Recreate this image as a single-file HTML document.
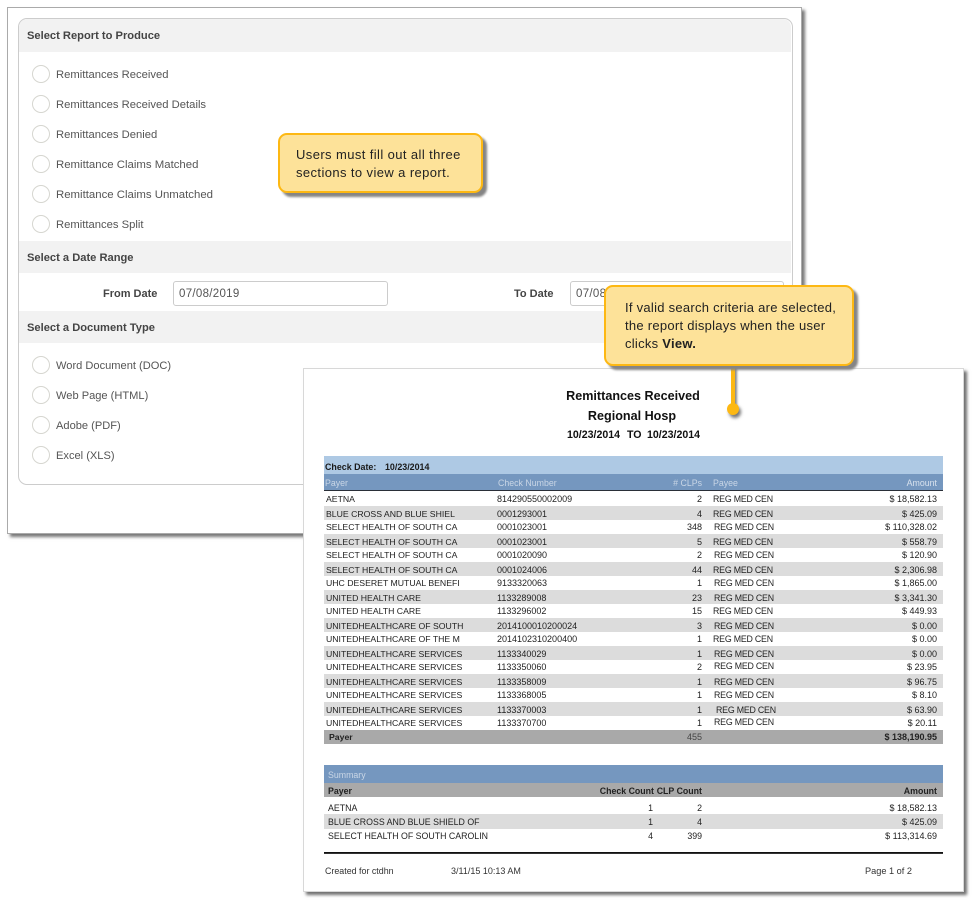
<!DOCTYPE html>
<html><head><meta charset="utf-8">
<style>
html,body{margin:0;padding:0;background:#fff}
body{width:972px;height:903px;position:relative;overflow:hidden;font-family:"Liberation Sans",sans-serif}
#w{position:absolute;left:0;top:0;width:972px;height:903px;filter:blur(.25px)}
.abs,.t,.rad,.hd,.lb{position:absolute}
.hd{left:19px;width:772px;background:#f2f2f2;}
.h{position:absolute;left:27px;font-size:11.15px;font-weight:bold;color:#444;line-height:14px;white-space:nowrap}
.lb{left:56px;font-size:11.25px;color:#555;line-height:14px;white-space:nowrap}
.rad{left:32px;width:16px;height:16px;border:1px solid #d6d6d0;border-radius:50%;background:#fff}
.t{font-size:8.8px;line-height:12px;color:#222;white-space:nowrap}
.row{position:absolute;left:324px;width:619px;height:14px}
.g{background:#dcdcdc}
.a,.b,.c,.d,.e{position:absolute;top:1px;line-height:12px;color:#222;white-space:nowrap}
.g span{top:2px}
.a{left:2px;font-size:8.7px}
.b{left:173px;font-size:9px}
.c{right:241px;font-size:9px}
.d{left:389px;font-size:8.8px;letter-spacing:-.2px}
.e{right:6px;font-size:9px}
.call{position:absolute;box-sizing:border-box;background:#fde299;border:2px solid #fdb813;border-radius:9px;box-shadow:4px 4px 2px #858585;font-size:13px;line-height:18px;color:#222;white-space:nowrap}
</style></head>
<body><div id="w">
<!-- back panel -->
<div class="abs" style="left:7px;top:7px;width:793px;height:525px;background:#fff;border:1px solid #aaa;box-shadow:3px 3px 3px #777"></div>
<div class="abs" style="left:18px;top:18px;width:773px;height:465px;background:#fff;border:1px solid #ccc;border-radius:9px"></div>
<div class="hd" style="top:19px;height:33px;border-radius:8px 8px 0 0"></div>
<div class="h" style="top:29px">Select Report to Produce</div>
<div class="rad" style="top:65px"></div><div class="lb" style="top:68px">Remittances Received</div>
<div class="rad" style="top:95px"></div><div class="lb" style="top:98px">Remittances Received Details</div>
<div class="rad" style="top:125px"></div><div class="lb" style="top:128px">Remittances Denied</div>
<div class="rad" style="top:155px"></div><div class="lb" style="top:158px;font-size:11.4px">Remittance Claims Matched</div>
<div class="rad" style="top:185px"></div><div class="lb" style="top:188px;font-size:11.4px">Remittance Claims Unmatched</div>
<div class="rad" style="top:215px"></div><div class="lb" style="top:218px">Remittances Split</div>
<div class="hd" style="top:241px;height:32px"></div>
<div class="h" style="top:251px">Select a Date Range</div>
<div class="h" style="left:103px;top:287px;font-size:11px">From Date</div>
<div class="abs" style="left:173px;top:281px;width:213px;height:23px;border:1px solid #ccc;border-radius:3px;background:#fff"></div>
<div class="lb" style="left:179px;top:287px;font-size:11.5px;letter-spacing:.3px">07/08/2019</div>
<div class="h" style="left:514px;top:287px;font-size:11px">To Date</div>
<div class="abs" style="left:570px;top:281px;width:212px;height:23px;border:1px solid #ccc;border-radius:3px;background:#fff"></div>
<div class="lb" style="left:576px;top:287px;font-size:11.5px;letter-spacing:.3px">07/08/2019</div>
<div class="hd" style="top:311px;height:32px"></div>
<div class="h" style="top:321px">Select a Document Type</div>
<div class="rad" style="top:356px"></div><div class="lb" style="top:359px;font-size:11.1px">Word Document (DOC)</div>
<div class="rad" style="top:386px"></div><div class="lb" style="top:389px;font-size:11.1px">Web Page (HTML)</div>
<div class="rad" style="top:416px"></div><div class="lb" style="top:419px;font-size:11.1px">Adobe (PDF)</div>
<div class="rad" style="top:446px"></div><div class="lb" style="top:449px;font-size:11.1px">Excel (XLS)</div>

<!-- callout 1 -->
<div class="call" style="left:278px;top:133px;width:205px;height:60px;padding:11px 0 0 16px;letter-spacing:.4px">Users must fill out all three<br>sections to view a report.</div>

<!-- report -->
<div class="abs" style="left:303px;top:368px;width:659px;height:522px;background:#fff;border:1px solid #d8d8d8;box-shadow:3px 3px 3px #6f6f6f"></div>
<div class="t" style="left:533px;width:200px;text-align:center;top:389px;font-size:12.6px;line-height:14px;font-weight:bold;color:#111">Remittances Received</div>
<div class="t" style="left:532px;width:200px;text-align:center;top:409px;font-size:12.6px;line-height:14px;font-weight:bold;color:#111">Regional Hosp</div>
<div class="t" style="left:567px;top:429px;font-size:10.6px;line-height:13px;font-weight:bold;color:#111">10/23/2014</div>
<div class="t" style="left:627px;top:429px;font-size:10.6px;line-height:13px;font-weight:bold;color:#111">TO</div>
<div class="t" style="left:647px;top:429px;font-size:10.6px;line-height:13px;font-weight:bold;color:#111">10/23/2014</div>

<div class="abs" style="left:324px;top:456px;width:619px;height:18px;background:#aec9e4"></div>
<div class="t" style="left:325px;top:461px;font-weight:bold;font-size:8.9px;color:#1a1a1a">Check Date:</div>
<div class="t" style="left:385px;top:461px;font-weight:bold;font-size:8.9px;color:#1a1a1a">10/23/2014</div>
<div class="abs" style="left:324px;top:474px;width:619px;height:16px;background:#7597bf;border-bottom:1px solid #2a2f38"></div>
<div class="t" style="left:325px;top:477px;color:#c9d6e6">Payer</div>
<div class="t" style="left:498px;top:477px;color:#c9d6e6">Check Number</div>
<div class="t" style="right:270px;top:477px;color:#c9d6e6">&#35; CLPs</div>
<div class="t" style="left:713px;top:477px;color:#c9d6e6">Payee</div>
<div class="t" style="right:35px;top:477px;color:#d8e2ee">Amount</div>

<div class="row" style="top:492px"><span class="a">AETNA</span><span class="b">814290550002009</span><span class="c">2</span><span class="d">REG MED CEN</span><span class="e">$ 18,582.13</span></div>
<div class="row g" style="top:506px"><span class="a">BLUE CROSS AND BLUE SHIEL</span><span class="b">0001293001</span><span class="c">4</span><span class="d">REG MED CEN</span><span class="e">$ 425.09</span></div>
<div class="row" style="top:520px"><span class="a">SELECT HEALTH OF SOUTH CA</span><span class="b">0001023001</span><span class="c">348</span><span class="d" style="left:390px">REG MED CEN</span><span class="e">$ 110,328.02</span></div>
<div class="row g" style="top:534px"><span class="a">SELECT HEALTH OF SOUTH CA</span><span class="b">0001023001</span><span class="c">5</span><span class="d">REG MED CEN</span><span class="e">$ 558.79</span></div>
<div class="row" style="top:548px"><span class="a">SELECT HEALTH OF SOUTH CA</span><span class="b">0001020090</span><span class="c">2</span><span class="d" style="left:390px">REG MED CEN</span><span class="e">$ 120.90</span></div>
<div class="row g" style="top:562px"><span class="a">SELECT HEALTH OF SOUTH CA</span><span class="b">0001024006</span><span class="c">44</span><span class="d">REG MED CEN</span><span class="e">$ 2,306.98</span></div>
<div class="row" style="top:576px"><span class="a">UHC DESERET MUTUAL BENEFI</span><span class="b">9133320063</span><span class="c">1</span><span class="d" style="left:390px">REG MED CEN</span><span class="e">$ 1,865.00</span></div>
<div class="row g" style="top:590px"><span class="a">UNITED HEALTH CARE</span><span class="b">1133289008</span><span class="c">23</span><span class="d" style="left:390px">REG MED CEN</span><span class="e">$ 3,341.30</span></div>
<div class="row" style="top:604px"><span class="a">UNITED HEALTH CARE</span><span class="b">1133296002</span><span class="c">15</span><span class="d">REG MED CEN</span><span class="e">$ 449.93</span></div>
<div class="row g" style="top:618px"><span class="a">UNITEDHEALTHCARE OF SOUTH</span><span class="b">2014100010200024</span><span class="c">3</span><span class="d" style="left:390px">REG MED CEN</span><span class="e">$ 0.00</span></div>
<div class="row" style="top:632px"><span class="a">UNITEDHEALTHCARE OF THE M</span><span class="b">2014102310200400</span><span class="c">1</span><span class="d">REG MED CEN</span><span class="e">$ 0.00</span></div>
<div class="row g" style="top:646px"><span class="a">UNITEDHEALTHCARE SERVICES</span><span class="b">1133340029</span><span class="c">1</span><span class="d" style="left:390px">REG MED CEN</span><span class="e">$ 0.00</span></div>
<div class="row" style="top:660px"><span class="a">UNITEDHEALTHCARE SERVICES</span><span class="b">1133350060</span><span class="c">2</span><span class="d" style="left:390px;top:0">REG MED CEN</span><span class="e">$ 23.95</span></div>
<div class="row g" style="top:674px"><span class="a">UNITEDHEALTHCARE SERVICES</span><span class="b">1133358009</span><span class="c">1</span><span class="d" style="left:390px">REG MED CEN</span><span class="e">$ 96.75</span></div>
<div class="row" style="top:688px"><span class="a">UNITEDHEALTHCARE SERVICES</span><span class="b">1133368005</span><span class="c">1</span><span class="d" style="left:390px">REG MED CEN</span><span class="e">$ 8.10</span></div>
<div class="row g" style="top:702px"><span class="a">UNITEDHEALTHCARE SERVICES</span><span class="b">1133370003</span><span class="c">1</span><span class="d" style="left:392px">REG MED CEN</span><span class="e">$ 63.90</span></div>
<div class="row" style="top:716px"><span class="a">UNITEDHEALTHCARE SERVICES</span><span class="b">1133370700</span><span class="c">1</span><span class="d" style="left:390px;top:0">REG MED CEN</span><span class="e">$ 20.11</span></div>
<div class="row" style="top:730px;background:#a9a9a9"><span class="a" style="left:5px;font-weight:bold">Payer</span><span class="c" style="color:#444">455</span><span class="e" style="font-weight:bold">$ 138,190.95</span></div>

<div class="abs" style="left:324px;top:765px;width:619px;height:18px;background:#7597bf"></div>
<div class="t" style="left:328px;top:769px;color:#c9d6e6">Summary</div>
<div class="abs" style="left:324px;top:783px;width:619px;height:14px;background:#a9a9a9"></div>
<div class="t" style="left:328px;top:785px;font-weight:bold">Payer</div>
<div class="t" style="right:318px;top:785px;font-weight:bold">Check Count</div>
<div class="t" style="right:270px;top:785px;font-weight:bold">CLP Count</div>
<div class="t" style="right:35px;top:785px;font-weight:bold">Amount</div>
<div class="abs g" style="left:324px;top:814px;width:619px;height:15px"></div>
<div class="t" style="left:328px;top:802px">AETNA</div><div class="t" style="right:319px;top:802px">1</div><div class="t" style="right:270px;top:802px">2</div><div class="t" style="right:35px;top:802px;font-size:9px">$ 18,582.13</div>
<div class="t" style="left:328px;top:816px">BLUE CROSS AND BLUE SHIELD OF</div><div class="t" style="right:319px;top:816px">1</div><div class="t" style="right:270px;top:816px">4</div><div class="t" style="right:35px;top:816px;font-size:9px">$ 425.09</div>
<div class="t" style="left:328px;top:830px">SELECT HEALTH OF SOUTH CAROLIN</div><div class="t" style="right:319px;top:830px">4</div><div class="t" style="right:270px;top:830px">399</div><div class="t" style="right:35px;top:830px;font-size:9px">$ 113,314.69</div>
<div class="abs" style="left:324px;top:852px;width:619px;height:1px;background:#111;border-bottom:1px solid #333"></div>
<div class="t" style="left:325px;top:865px;color:#333;font-size:8.9px">Created for ctdhn</div>
<div class="t" style="left:451px;top:865px;color:#333;font-size:9px">3/11/15 10:13 AM</div>
<div class="t" style="left:865px;top:865px;color:#333;font-size:9.2px">Page 1 of 2</div>

<!-- connector + callout 2 -->
<div class="abs" style="left:731px;top:364px;width:4px;height:44px;background:#fdb813;box-shadow:2px 1px 2px #888"></div>
<div class="abs" style="left:727px;top:403px;width:12px;height:12px;border-radius:50%;background:#fdb813;box-shadow:2px 3px 3px #777"></div>
<div class="call" style="left:604px;top:285px;width:250px;height:81px;padding:12px 0 0 19px;letter-spacing:.27px">If valid search criteria are selected,<br>the report displays when the user<br>clicks <b>View.</b></div>
</div></body></html>
